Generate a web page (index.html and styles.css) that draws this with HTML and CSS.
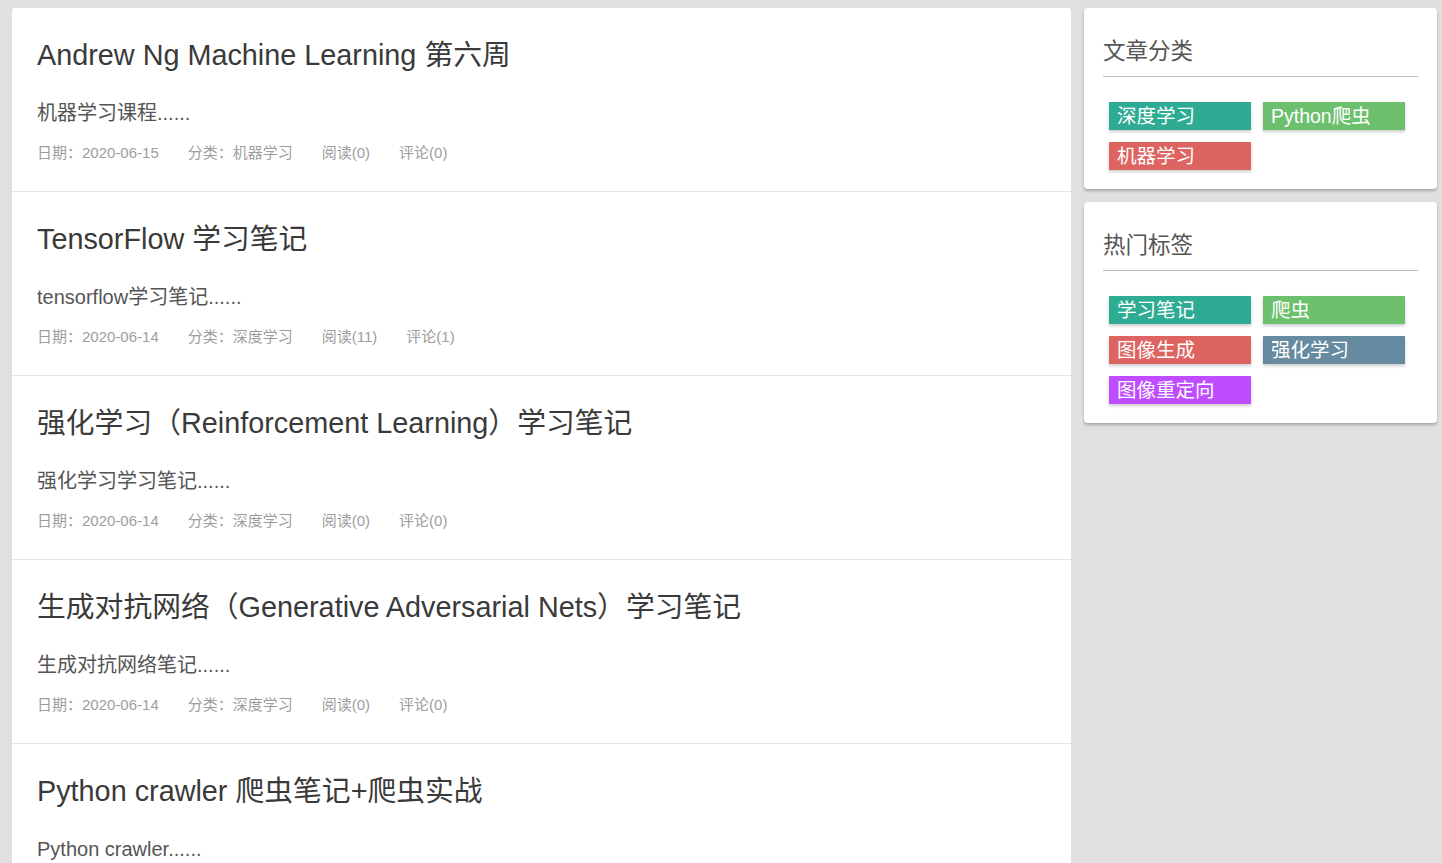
FILE: index.html
```html
<!DOCTYPE html>
<html lang="zh-CN">
<head>
<meta charset="utf-8">
<title>Blog</title>
<link rel="stylesheet" href="styles.css">
</head>
<body>
<div class="layout">
  <main class="posts">
    <article class="post">
      <h2 class="post-title">Andrew Ng Machine Learning 第六周</h2>
      <p class="post-desc">机器学习课程......</p>
      <div class="post-meta"><span>日期：2020-06-15</span><span>分类：机器学习</span><span>阅读(0)</span><span>评论(0)</span></div>
    </article>
    <article class="post">
      <h2 class="post-title">TensorFlow 学习笔记</h2>
      <p class="post-desc">tensorflow学习笔记......</p>
      <div class="post-meta"><span>日期：2020-06-14</span><span>分类：深度学习</span><span>阅读(11)</span><span>评论(1)</span></div>
    </article>
    <article class="post">
      <h2 class="post-title">强化学习（Reinforcement Learning）学习笔记</h2>
      <p class="post-desc">强化学习学习笔记......</p>
      <div class="post-meta"><span>日期：2020-06-14</span><span>分类：深度学习</span><span>阅读(0)</span><span>评论(0)</span></div>
    </article>
    <article class="post">
      <h2 class="post-title">生成对抗网络（Generative Adversarial Nets）学习笔记</h2>
      <p class="post-desc">生成对抗网络笔记......</p>
      <div class="post-meta"><span>日期：2020-06-14</span><span>分类：深度学习</span><span>阅读(0)</span><span>评论(0)</span></div>
    </article>
    <article class="post">
      <h2 class="post-title">Python crawler 爬虫笔记+爬虫实战</h2>
      <p class="post-desc">Python crawler......</p>
      <div class="post-meta"><span>日期：2020-06-13</span><span>分类：Python爬虫</span><span>阅读(0)</span><span>评论(0)</span></div>
    </article>
  </main>
  <aside class="sidebar">
    <section class="widget">
      <h3 class="widget-title">文章分类</h3>
      <div class="tags">
        <a class="tag teal">深度学习</a>
        <a class="tag green">Python爬虫</a>
        <a class="tag red">机器学习</a>
      </div>
    </section>
    <section class="widget">
      <h3 class="widget-title">热门标签</h3>
      <div class="tags">
        <a class="tag teal">学习笔记</a>
        <a class="tag green">爬虫</a>
        <a class="tag red">图像生成</a>
        <a class="tag slate">强化学习</a>
        <a class="tag purple">图像重定向</a>
      </div>
    </section>
  </aside>
</div>
</body>
</html>
```

FILE: styles.css
```css
html, body {
  margin: 0;
  padding: 0;
  background: #e0e0e0;
  height: 100%;
  overflow: hidden;
}
body {
  font-family: "Liberation Sans", Arial, "Noto Sans CJK SC", sans-serif;
  color: #333;
}
.layout {
  display: flex;
  align-items: flex-start;
  gap: 13px;
  padding: 8px 5px 0 12px;
}
.posts {
  width: 1059px;
  flex: none;
  background: #fff;
  border-radius: 3px 3px 0 0;
}
.post {
  padding: 30px 25px 28px;
  border-bottom: 1px solid #e4e4e4;
}
.post-title {
  margin: 0;
  font-size: 28.8px;
  line-height: 34px;
  font-weight: normal;
  color: #3a3a3a;
}
.post-desc {
  margin: 28px 0 0;
  font-size: 20px;
  line-height: 26px;
  color: #555;
}
.post-meta {
  margin-top: 17px;
  font-size: 15px;
  line-height: 20px;
  color: #9d9d9d;
  display: flex;
  gap: 29px;
}
.sidebar {
  width: 353px;
  flex: none;
  display: flex;
  flex-direction: column;
  gap: 13px;
}
.widget {
  background: #fff;
  border-radius: 4px;
  box-shadow: 0 2px 3px rgba(0,0,0,0.25);
  padding: 29px 19px 13px;
}
.widget-title {
  margin: 0;
  font-size: 22.5px;
  line-height: 29px;
  font-weight: normal;
  color: #555;
  padding-bottom: 10px;
  border-bottom: 1px solid #bdbdbd;
}
.tags {
  display: grid;
  grid-template-columns: 142px 142px;
  column-gap: 12px;
  row-gap: 12px;
  padding: 25px 6px 6px;
}
.tag {
  display: block;
  height: 28px;
  line-height: 28px;
  padding: 0 8px;
  font-size: 19.5px;
  color: #fff;
  box-shadow: 0 2px 3px rgba(0,0,0,0.2);
  white-space: nowrap;
}
.teal { background: #2eab93; }
.green { background: #6cbf6c; }
.red { background: #dd6461; }
.slate { background: #668aa0; }
.purple { background: #c04cff; }
```
